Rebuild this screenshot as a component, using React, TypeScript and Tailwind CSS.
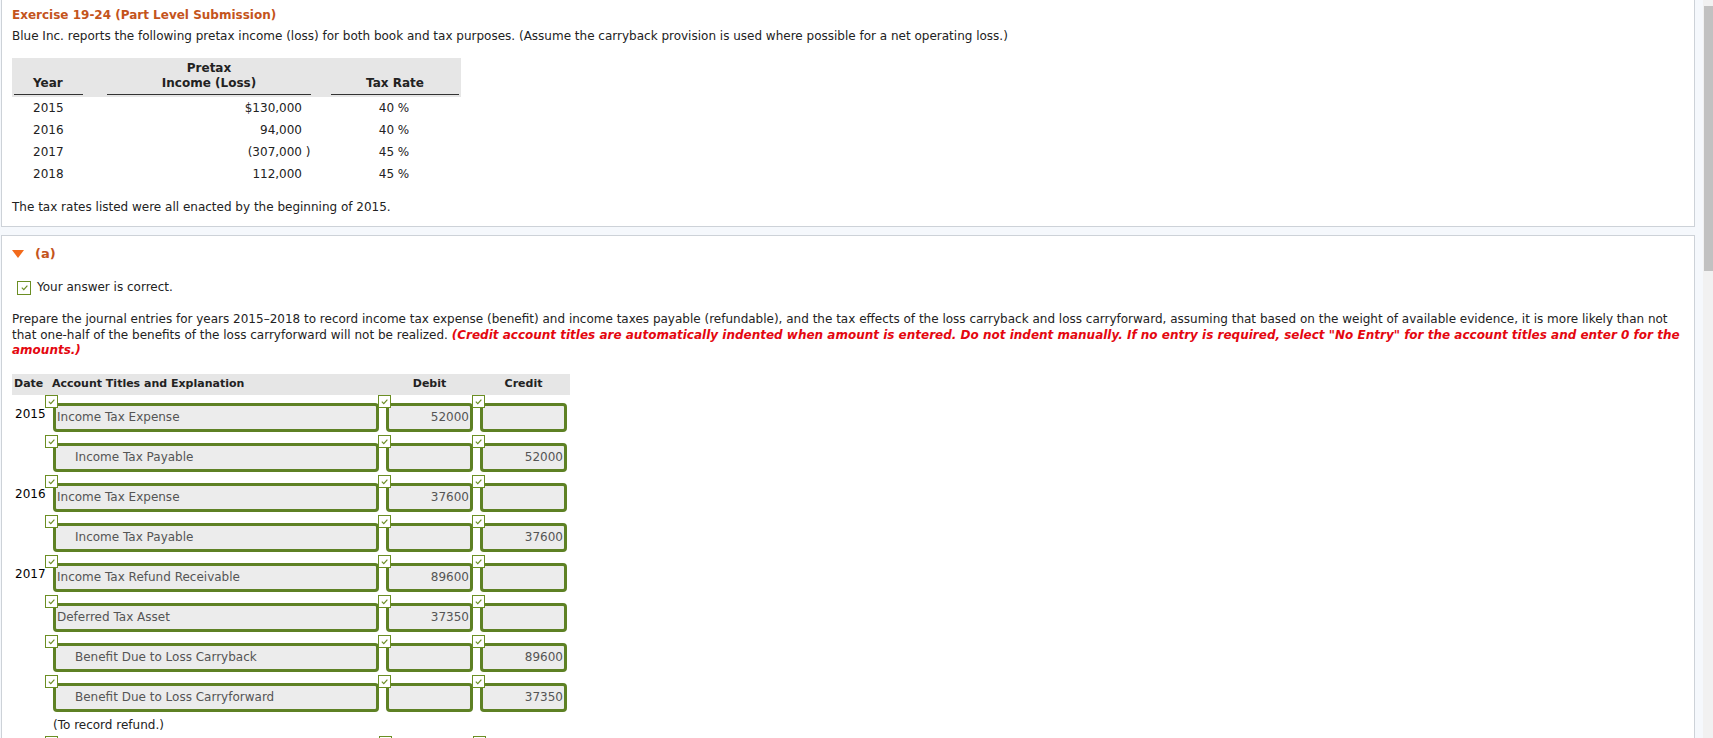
import React from "react";

const font = { fontFamily: '"DejaVu Sans", Verdana, sans-serif' };

function Check({ className = "" }: { className?: string }) {
  return (
    <span
      className={`flex h-[13px] w-[13px] items-center justify-center border border-[#6b8e23] bg-white ${className}`}
    >
      <svg viewBox="0 0 10 10" className="h-[9px] w-[9px]">
        <path d="M2 5.2 L4.2 7.3 L8.2 2.8" fill="none" stroke="#6b8e23" strokeWidth="1.3" />
      </svg>
    </span>
  );
}

function Box({
  value,
  width,
  align = "left",
  indent = false,
}: {
  value: string;
  width: string;
  align?: "left" | "right";
  indent?: boolean;
}) {
  return (
    <div className={`relative ${width}`}>
      <Check className="absolute -left-[8px] -top-[8px] z-10" />
      <div
        className={`flex h-[29px] items-center rounded-[4px] border-[3px] border-[#5e8124] bg-[#ececec] text-[12px] text-[#555] ${
          align === "right" ? "justify-end pr-[1px]" : indent ? "pl-[19px]" : "pl-[1px]"
        }`}
      >
        {value}
      </div>
    </div>
  );
}

const pretax = [
  { year: "2015", income: "$130,000", suffix: "", rate: "40 %" },
  { year: "2016", income: "94,000", suffix: "", rate: "40 %" },
  { year: "2017", income: "(307,000", suffix: " )", rate: "45 %" },
  { year: "2018", income: "112,000", suffix: "", rate: "45 %" },
];

const entries = [
  { date: "2015", account: "Income Tax Expense", indent: false, debit: "52000", credit: "" },
  { date: "", account: "Income Tax Payable", indent: true, debit: "", credit: "52000" },
  { date: "2016", account: "Income Tax Expense", indent: false, debit: "37600", credit: "" },
  { date: "", account: "Income Tax Payable", indent: true, debit: "", credit: "37600" },
  { date: "2017", account: "Income Tax Refund Receivable", indent: false, debit: "89600", credit: "" },
  { date: "", account: "Deferred Tax Asset", indent: false, debit: "37350", credit: "" },
  { date: "", account: "Benefit Due to Loss Carryback", indent: true, debit: "", credit: "89600" },
  { date: "", account: "Benefit Due to Loss Carryforward", indent: true, debit: "", credit: "37350" },
];

export default function App() {
  return (
    <div style={font} className="flex h-[738px] w-[1713px] overflow-hidden bg-[#f5f8fc] text-[#222]">
      <div className="w-[1703px] pl-[1px]">
        {/* problem statement */}
        <div className="h-[227px] w-[1694px] border border-t-0 border-[#cdd2d8] bg-white pl-[10px] pt-[7px]">
          <div className="text-[12px] font-bold leading-[17px] text-[#c4541c]">
            Exercise 19-24 (Part Level Submission)
          </div>
          <div className="mt-[4px] text-[12px] leading-[16px]">
            Blue Inc. reports the following pretax income (loss) for both book and tax purposes. (Assume the
            carryback provision is used where possible for a net operating loss.)
          </div>

          <div className="mt-[14px] w-[449px] text-[12px]">
            <div className="flex h-[39px] items-end bg-[#e6e6e6] pb-[2px] font-bold">
              <div className="ml-[2px] w-[69px] border-b border-[#333] pb-[3px] pl-[19px] leading-[15px]">Year</div>
              <div className="ml-[24px] w-[204px] border-b border-[#333] pb-[3px] text-center leading-[15px]">
                Pretax
                <br />
                Income (Loss)
              </div>
              <div className="ml-[20px] w-[128px] border-b border-[#333] pb-[3px] text-center leading-[15px]">
                Tax Rate
              </div>
            </div>
            {pretax.map((r) => (
              <div key={r.year} className="flex h-[22px] items-center">
                <div className="w-[95px] pl-[21px]">{r.year}</div>
                <div className="flex w-[205px] justify-end">
                  <span>{r.income}</span>
                  <span className="w-[10px] whitespace-pre">{r.suffix}</span>
                </div>
                <div className="w-[137px] pl-[27px] text-center">{r.rate}</div>
              </div>
            ))}
          </div>

          <div className="mt-[15px] text-[12px] leading-[15px]">
            The tax rates listed were all enacted by the beginning of 2015.
          </div>
        </div>

        {/* part (a) */}
        <div className="mt-[8px] h-[600px] w-[1694px] border border-[#cdd2d8] bg-white pl-[10px] pt-[10px]">
          <div className="flex items-center leading-[16px]">
            <svg viewBox="0 0 12 8" className="h-[8px] w-[12px]">
              <path d="M0 0 H12 L6 8 Z" fill="#f26a1b" />
            </svg>
            <span className="ml-[11px] text-[13px] font-bold text-[#c4541c]">(a)</span>
          </div>

          <div className="mt-[18px] flex items-center text-[12px] leading-[15px]">
            <Check className="ml-[5px] h-[14px] w-[14px]" />
            <span className="ml-[6px]">Your answer is correct.</span>
          </div>

          <div className="mt-[17px] text-[12px] leading-[15.5px]">
            Prepare the journal entries for years 2015–2018 to record income tax expense (benefit) and income taxes
            payable (refundable), and the tax effects of the loss carryback and loss carryforward, assuming that based
            on the weight of available evidence, it is more likely than not
            <br />
            that one-half of the benefits of the loss carryforward will not be realized.{" "}
            <span className="font-bold italic text-[#e4070f]">
              (Credit account titles are automatically indented when amount is entered. Do not indent manually. If
              no entry is required, select "No Entry" for the account titles and enter 0 for the
              <br />
              amounts.)
            </span>
          </div>

          <div className="mt-[15px] w-[558px]">
            <div className="flex h-[21px] items-center bg-[#e6e6e6] text-[11px] font-bold">
              <div className="w-[40px] pl-[2px]">Date</div>
              <div className="w-[334px]">Account Titles and Explanation</div>
              <div className="w-[87px] text-center">Debit</div>
              <div className="ml-[7px] w-[87px] text-center">Credit</div>
            </div>

            {entries.map((e, i) => (
              <div key={i} className="flex h-[40px] pt-[8px]">
                <div className="w-[41px] pl-[3px] pt-[4px] text-[12px] leading-[15px] text-black">{e.date}</div>
                <Box value={e.account} width="w-[326px]" indent={e.indent} />
                <div className="ml-[7px]">
                  <Box value={e.debit} width="w-[87px]" align="right" />
                </div>
                <div className="ml-[7px]">
                  <Box value={e.credit} width="w-[87px]" align="right" />
                </div>
              </div>
            ))}

            <div className="mt-[3px] pl-[41px] text-[12px] leading-[15px]">(To record refund.)</div>
            <div className="mt-[3px] flex">
              <Check className="ml-[33px]" />
              <Check className="ml-[321px]" />
              <Check className="ml-[81px]" />
            </div>
          </div>
        </div>
      </div>

      {/* scrollbar */}
      <div className="w-[10px] bg-[#f1f1f1] pt-[6px]">
        <div className="ml-[1px] h-[265px] w-[9px] bg-[#c1c1c1]" />
      </div>
    </div>
  );
}
